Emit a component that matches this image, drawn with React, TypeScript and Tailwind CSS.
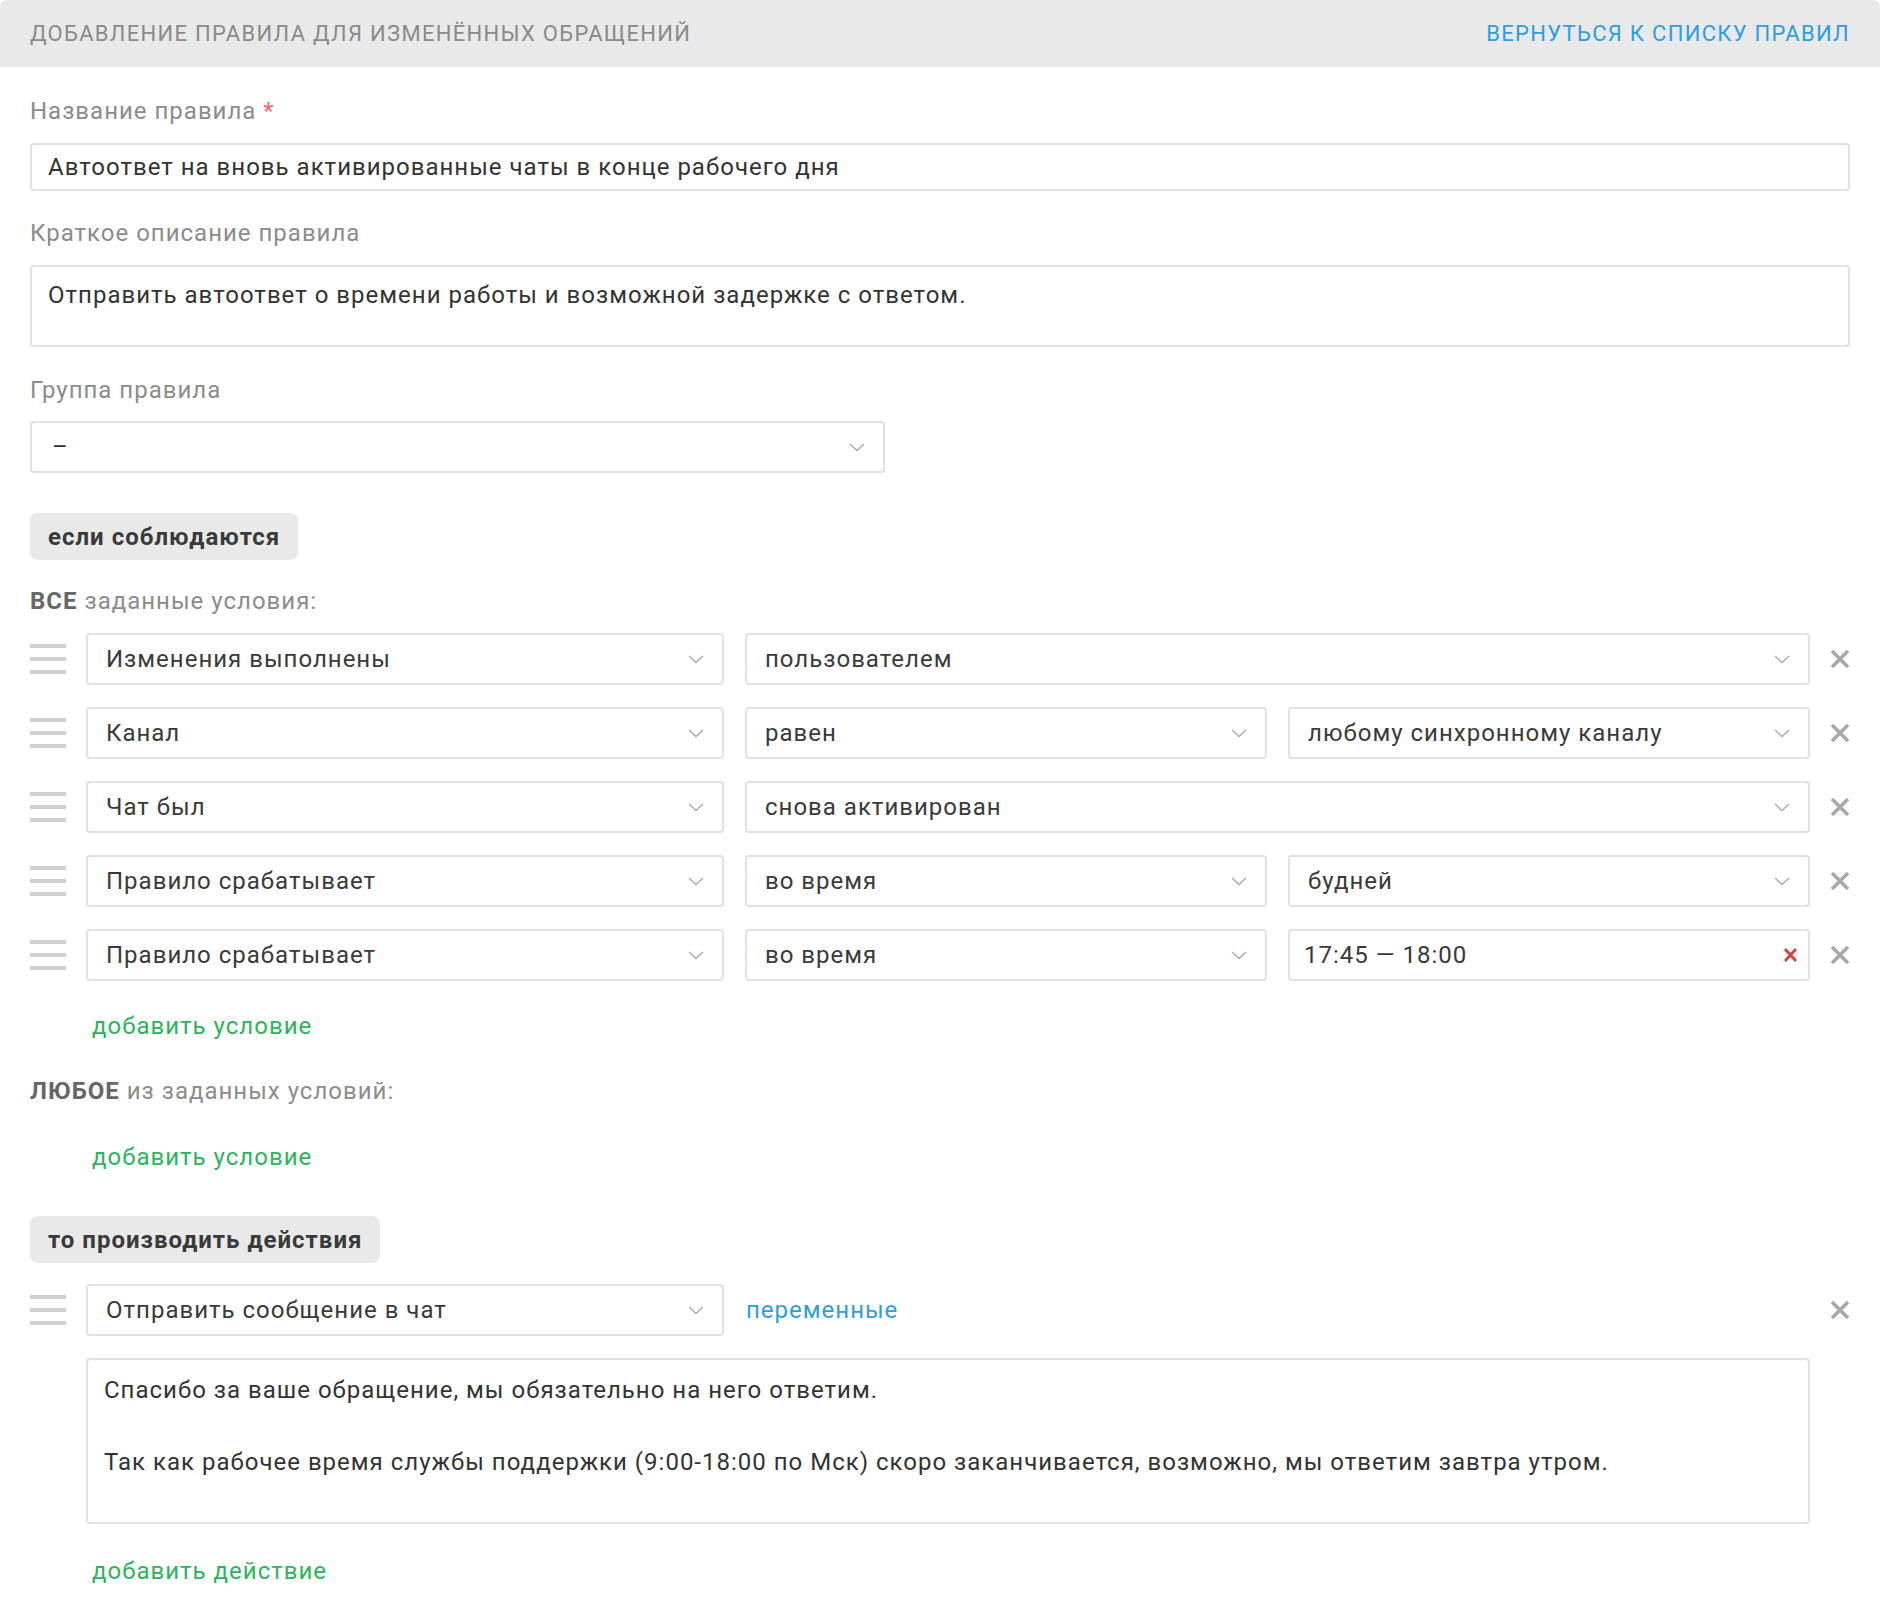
import React from "react";

const font = { fontFamily: "Roboto, 'Noto Sans', sans-serif" };

function Chevron() {
  return (
    <svg width="16" height="9" viewBox="0 0 16 9" fill="none" className="shrink-0">
      <path d="M1 1l7 6.5L15 1" stroke="#a9a9a9" strokeWidth="1.3" />
    </svg>
  );
}

function Cross({ red = false }: { red?: boolean }) {
  if (red) {
    return (
      <svg width="15" height="16" viewBox="0 0 15 16" fill="none" className="shrink-0">
        <path d="M2 2l11 12M13 2L2 14" stroke="#e53935" strokeWidth="2.6" />
      </svg>
    );
  }
  return (
    <svg width="20" height="20" viewBox="0 0 20 20" fill="none" className="shrink-0">
      <path d="M2 2l16 16M18 2L2 18" stroke="#a8a8a8" strokeWidth="3.6" />
    </svg>
  );
}

function Handle() {
  return (
    <div className="w-[36px] shrink-0 flex flex-col gap-[9px] mr-[20px]">
      <div className="h-[4px] bg-[#d0d0d0]" />
      <div className="h-[4px] bg-[#d0d0d0]" />
      <div className="h-[4px] bg-[#d0d0d0]" />
    </div>
  );
}

function Select({ value, className = "" }: { value: string; className?: string }) {
  return (
    <div
      className={`h-[52px] border-2 border-[#e2e2e2] rounded-[4px] bg-white flex items-center justify-between pl-[18px] pr-[18px] text-[24px] tracking-[1px] text-[#3a3a3a] ${className}`}
    >
      <span className="truncate">{value}</span>
      <Chevron />
    </div>
  );
}

function Label({ children, className = "" }: { children: React.ReactNode; className?: string }) {
  return (
    <div className={`text-[24px] tracking-[1px] leading-[26px] text-[#8c8c8c] ${className}`}>{children}</div>
  );
}

function AddLink({ children, className = "" }: { children: React.ReactNode; className?: string }) {
  return (
    <div className={`pl-[62px] text-[24px] tracking-[1px] leading-[26px] text-[#2bb55a] ${className}`}>
      {children}
    </div>
  );
}

function SectionButton({ children, className = "" }: { children: React.ReactNode; className?: string }) {
  return (
    <div
      className={`inline-flex items-center h-[47px] px-[18px] rounded-[8px] bg-[#e9e9e9] text-[24px] tracking-[1px] font-bold text-[#3a3a3a] ${className}`}
    >
      {children}
    </div>
  );
}

type Row = { a: string; b: string; c?: string; time?: boolean };

const rows: Row[] = [
  { a: "Изменения выполнены", b: "пользователем" },
  { a: "Канал", b: "равен", c: "любому синхронному каналу" },
  { a: "Чат был", b: "снова активирован" },
  { a: "Правило срабатывает", b: "во время", c: "будней" },
  { a: "Правило срабатывает", b: "во время", c: "17:45 — 18:00", time: true },
];

function ConditionRow({ row }: { row: Row }) {
  return (
    <div className="flex items-center">
      <Handle />
      <div className="flex-1 grid grid-cols-[638px_1fr_1fr] gap-x-[21px]">
        <Select value={row.a} />
        {row.c ? (
          <>
            <Select value={row.b} />
            {row.time ? (
              <div className="h-[52px] border-2 border-[#e2e2e2] rounded-[4px] bg-white flex items-center justify-between pl-[14px] pr-[10px] text-[24px] tracking-[1px] text-[#3a3a3a]">
                <span>{row.c}</span>
                <Cross red />
              </div>
            ) : (
              <Select value={row.c} className="pl-[14px]" />
            )}
          </>
        ) : (
          <Select value={row.b} className="col-span-2" />
        )}
      </div>
      <div className="w-[40px] flex justify-end">
        <Cross />
      </div>
    </div>
  );
}

export default function App() {
  return (
    <div className="min-h-[1618px] bg-white" style={font}>
      {/* Header */}
      <header className="h-[67px] bg-[#e9e9e9] rounded-t-[6px] px-[30px] flex items-center justify-between">
        <h1 className="text-[22px] text-[#8a8a8a] uppercase tracking-[1.3px]">
          Добавление правила для изменённых обращений
        </h1>
        <a className="text-[22px] text-[#2d9ee0] uppercase tracking-[1.3px]">Вернуться к списку правил</a>
      </header>

      <main className="px-[30px]">
        <Label className="mt-[31px]">
          Название правила <span className="text-[#f0606a]">*</span>
        </Label>
        <div className="mt-[19px] h-[48px] border-2 border-[#e2e2e2] rounded-[4px] flex items-center px-[16px] text-[24px] tracking-[1px] text-[#333]">
          Автоответ на вновь активированные чаты в конце рабочего дня
        </div>

        <Label className="mt-[29px]">Краткое описание правила</Label>
        <div className="mt-[19px] h-[82px] border-2 border-[#e2e2e2] rounded-[4px] px-[16px] pt-[14px] text-[24px] tracking-[1px] leading-[28px] text-[#333]">
          Отправить автоответ о времени работы и возможной задержке с ответом.
        </div>

        <Label className="mt-[30px]">Группа правила</Label>
        <div className="mt-[18px] w-[855px] h-[52px] border-2 border-[#e2e2e2] rounded-[4px] flex items-center justify-between pl-[20px] pr-[18px] text-[24px] text-[#333]">
          <span>–</span>
          <Chevron />
        </div>

        {/* Conditions */}
        <SectionButton className="mt-[40px]">если соблюдаются</SectionButton>

        <Label className="mt-[28px]">
          <span className="font-bold text-[#666]">ВСЕ</span> заданные условия:
        </Label>

        <div className="mt-[19px] flex flex-col gap-[22px]">
          {rows.map((r, i) => (
            <ConditionRow key={i} row={r} />
          ))}
        </div>

        <AddLink className="mt-[32px]">добавить условие</AddLink>

        <Label className="mt-[39px]">
          <span className="font-bold text-[#666]">ЛЮБОЕ</span> из заданных условий:
        </Label>

        <AddLink className="mt-[40px]">добавить условие</AddLink>

        {/* Actions */}
        <SectionButton className="mt-[46px]">то производить действия</SectionButton>

        <div className="mt-[21px] flex items-center">
          <Handle />
          <Select value="Отправить сообщение в чат" className="w-[638px]" />
          <a className="ml-[22px] text-[24px] tracking-[1px] text-[#2d9ee0]">переменные</a>
          <div className="flex-1 flex justify-end">
            <Cross />
          </div>
        </div>

        <div className="mt-[22px] ml-[56px] mr-[40px] h-[166px] border-2 border-[#e2e2e2] rounded-[4px] px-[16px] pt-[12px] text-[24px] tracking-[1px] leading-[36px] text-[#333]">
          <p>Спасибо за ваше обращение, мы обязательно на него ответим.</p>
          <p>&nbsp;</p>
          <p>
            Так как рабочее время службы поддержки (9:00-18:00 по Мск) скоро заканчивается, возможно, мы ответим завтра
            утром.
          </p>
        </div>

        <AddLink className="mt-[34px]">добавить действие</AddLink>
      </main>
    </div>
  );
}
